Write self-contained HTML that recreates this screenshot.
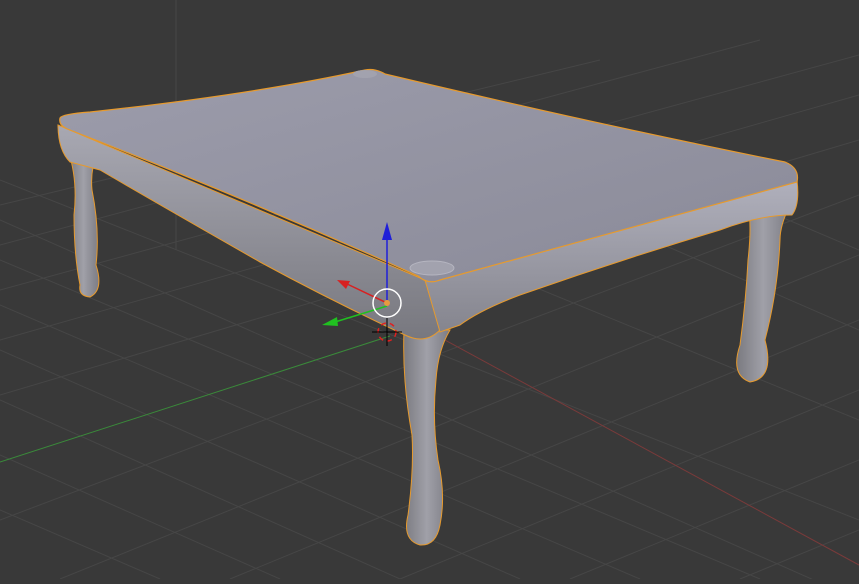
<!DOCTYPE html>
<html><head><style>html,body{margin:0;padding:0;background:#393939;overflow:hidden}</style></head>
<body>
<svg width="859" height="579" viewBox="0 0 859 579" xmlns="http://www.w3.org/2000/svg">
<defs>
<linearGradient id="top" x1="0" y1="0" x2="1" y2="1"><stop offset="0" stop-color="#9c9cab"/><stop offset="1" stop-color="#8a8a98"/></linearGradient>
<linearGradient id="apL" x1="0" y1="0" x2="0" y2="1"><stop offset="0" stop-color="#a8a8b2"/><stop offset="1" stop-color="#78787f"/></linearGradient>
<linearGradient id="apR" x1="0" y1="0" x2="0" y2="1"><stop offset="0" stop-color="#b0b0bc"/><stop offset="1" stop-color="#85858e"/></linearGradient>
<linearGradient id="leg" x1="0" y1="0" x2="1" y2="0"><stop offset="0" stop-color="#7a7a80"/><stop offset="0.5" stop-color="#a0a0a8"/><stop offset="1" stop-color="#7c7c84"/></linearGradient>
</defs>
<rect width="859" height="579" fill="#393939"/>
<g stroke="#464646" stroke-width="1">
<line x1="0" y1="180" x2="859" y2="520"/><line x1="0" y1="220" x2="859" y2="600"/>
<line x1="0" y1="260" x2="760" y2="579"/><line x1="0" y1="305" x2="640" y2="579"/>
<line x1="0" y1="350" x2="520" y2="579"/><line x1="0" y1="400" x2="400" y2="579"/>
<line x1="0" y1="455" x2="280" y2="579"/><line x1="0" y1="510" x2="160" y2="579"/>
<line x1="200" y1="150" x2="859" y2="420"/><line x1="400" y1="130" x2="859" y2="330"/>
<line x1="600" y1="140" x2="859" y2="250"/>
<line x1="0" y1="395" x2="859" y2="140"/><line x1="0" y1="340" x2="859" y2="95"/>
<line x1="0" y1="290" x2="859" y2="55"/><line x1="0" y1="245" x2="760" y2="40"/>
<line x1="0" y1="205" x2="600" y2="60"/><line x1="0" y1="520" x2="859" y2="195"/>
<line x1="60" y1="579" x2="859" y2="255"/><line x1="230" y1="579" x2="859" y2="320"/>
<line x1="400" y1="579" x2="859" y2="390"/><line x1="570" y1="579" x2="859" y2="460"/>
<line x1="740" y1="579" x2="859" y2="530"/>
<line x1="176" y1="0" x2="176" y2="250"/>
</g>
<line x1="340" y1="283" x2="859" y2="565" stroke="#7a3a3a" stroke-width="1"/>
<line x1="0" y1="462" x2="390" y2="336" stroke="#3a8a3a" stroke-width="1"/>
<!-- legs -->
<path d="M68 150 L98 150 Q90 170 92 190 Q100 230 96 265 Q104 290 90 297 Q78 296 80 285 Q74 255 74 215 Q78 180 68 150Z" fill="url(#leg)" stroke="#e69a2e" stroke-width="1"/>
<path d="M748 205 L790 205 Q780 225 780 240 Q778 290 765 340 Q775 378 750 382 Q730 375 740 345 Q746 300 748 260 Q752 225 748 205Z" fill="url(#leg)" stroke="#e69a2e" stroke-width="1"/>
<path d="M404 330 L450 330 Q438 350 436 380 Q432 420 438 460 Q446 495 440 525 Q436 546 420 545 Q402 540 408 515 Q414 470 412 435 Q402 380 404 330Z" fill="url(#leg)" stroke="#e69a2e" stroke-width="1"/>
<!-- apron left front -->
<path d="M58 125 L425 280 L440 330 Q425 345 405 335 Q330 300 260 262 Q160 205 100 170 L70 162 Q58 150 58 125Z" fill="url(#apL)" stroke="#e69a2e" stroke-width="1"/>
<!-- apron right front -->
<path d="M425 280 L797 180 Q800 205 792 215 Q760 215 720 230 Q620 260 520 295 Q480 310 460 325 L440 332Z" fill="url(#apR)" stroke="#e69a2e" stroke-width="1"/>
<!-- top -->
<path d="M60 118 Q62 114 90 112 Q250 95 365 70 Q375 68 385 74 Q600 125 785 162 Q800 168 797 182 L440 280 Q428 285 418 276 Q250 200 70 130 Q58 126 60 118Z" fill="url(#top)" stroke="#e69a2e" stroke-width="1.2"/>
<ellipse cx="432" cy="268" rx="22" ry="7" fill="#a2a2ae" stroke="#b5b5c0" stroke-width="1"/>
<ellipse cx="365" cy="74" rx="12" ry="4" fill="#a2a2ae"/>
<!-- gizmo -->
<line x1="387" y1="300" x2="387" y2="238" stroke="#1f1fd8" stroke-width="1.5"/>
<path d="M387 222 L382 240 L392 240Z" fill="#1f1fd8"/>
<line x1="387" y1="303" x2="345" y2="283" stroke="#d82020" stroke-width="1.5"/>
<path d="M337 280 L350 281 L346 289Z" fill="#d82020"/>
<line x1="387" y1="306" x2="335" y2="322" stroke="#20c020" stroke-width="1.5"/>
<path d="M322 325 L337 317 L338 326Z" fill="#20c020"/>
<circle cx="387" cy="303" r="14" fill="none" stroke="#fff" stroke-width="1.5"/>
<circle cx="387" cy="303" r="3" fill="#e69a40"/>
<circle cx="387" cy="332" r="9" fill="none" stroke="#e02020" stroke-width="1.5" stroke-dasharray="5 4"/>
<line x1="372" y1="332" x2="402" y2="332" stroke="#000" stroke-width="1"/>
<line x1="387" y1="318" x2="387" y2="346" stroke="#000" stroke-width="1"/>
</svg>
</body></html>
